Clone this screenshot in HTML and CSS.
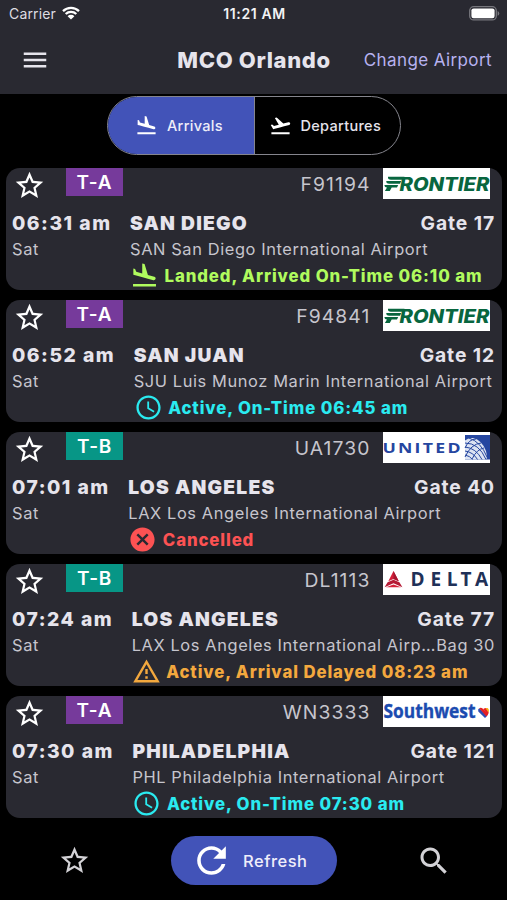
FILE: index.html
```html
<!DOCTYPE html>
<html lang="en">
<head>
<meta charset="utf-8">
<title>MCO Orlando</title>
<link rel="stylesheet" href="styles.css">
</head>
<body>
<svg class="defs" width="0" height="0">
  <symbol id="land" viewBox="0 0 24 24"><path d="M2.5 19h19v2h-19v-2zm7.18-5.73l4.35 1.16 5.31 1.42c.8.21 1.62-.26 1.84-1.06.21-.8-.26-1.62-1.06-1.84l-5.31-1.42-2.76-9.02L10.12 2v8.28L5.15 8.95l-.93-2.32-1.45-.39v5.17l1.6.43 5.31 1.43z"/></symbol>
  <symbol id="takeoff" viewBox="0 0 24 24"><path d="M2.5 19h19v2h-19v-2zm19.57-9.36c-.21-.8-1.04-1.28-1.84-1.06L14.92 10l-6.9-6.43-1.93.51 4.14 7.17-4.97 1.33-1.97-1.54-1.45.39 2.59 4.49 1.6-.43 5.31-1.42 4.35-1.16L21 11.49c.81-.23 1.28-1.05 1.07-1.85z"/></symbol>
  <symbol id="star" viewBox="0 0 24 24"><path d="M22 9.24l-7.19-.62L12 2 9.19 8.63 2 9.24l5.46 4.73L5.82 21 12 17.27 18.18 21l-1.63-7.03L22 9.24zM12 15.4l-3.76 2.27 1-4.28-3.32-2.88 4.38-.38L12 6.1l1.71 4.04 4.38.38-3.32 2.88 1 4.28L12 15.4z"/></symbol>
  <symbol id="clock" viewBox="0 0 24 24"><path d="M11.99 2C6.47 2 2 6.48 2 12s4.47 10 9.99 10C17.52 22 22 17.52 22 12S17.52 2 11.99 2zM12 20.100c-4.470 0-8.100-3.630-8.100-8.100s3.630-8.100 8.100-8.100 8.100 3.630 8.100 8.100-3.630 8.100-8.100 8.100zm.5-13.100H11v6l5.250 3.150.75-1.230-4.500-2.670z"/></symbol>
  <symbol id="cancel" viewBox="0 0 24 24"><path d="M12 2C6.470 2 2 6.470 2 12s4.470 10 10 10 10-4.470 10-10S17.530 2 12 2zm5 13.590L15.590 17 12 13.410 8.410 17 7 15.590 10.590 12 7 8.410 8.410 7 12 10.590 15.590 7 17 8.410 13.410 12 17 15.590z"/></symbol>
  <symbol id="warn" viewBox="0 0 24 24"><path d="M12 5.990L19.530 19H4.470L12 5.990M12 2L1 21h22L12 2zm1 14h-2v2h2v-2zm0-6h-2v4h2v-4z"/></symbol>
</svg>
<header>
  <div class="status-bar">
    <span class="carrier">Carrier
      <svg class="wifi" viewBox="0 0 18 14"><path d="M1 5.200A11.500 11.500 0 0 1 17 5.200M3.700 8A7.600 7.600 0 0 1 14.300 8" fill="none" stroke="#fff" stroke-width="2.300"/><path d="M9 13.600L5.600 10.200A4.800 4.800 0 0 1 12.400 10.200Z" fill="#fff"/></svg>
    </span>
    <span class="clock">11:21 AM</span>
    <svg class="battery" viewBox="0 0 31 15"><rect x=".7" y=".7" width="26.600" height="13.200" rx="4" fill="none" stroke="#77777d" stroke-width="1.300"/><rect x="2.400" y="2.400" width="23.200" height="9.800" rx="2.200" fill="#fff"/><path d="M28.600 5v4.800q1.700-.8 1.700-2.400T28.600 5z" fill="#77777d"/></svg>
  </div>
  <div class="app-bar">
    <svg class="menu" viewBox="0 0 24 24"><path d="M3 18h18v-2H3v2zm0-5h18v-2H3v2zm0-7v2h18V6H3z"/></svg>
    <h1>MCO Orlando</h1>
    <span class="change">Change Airport</span>
  </div>
</header>
<div class="segments">
  <div class="segment on"><svg class="seg-icon"><use href="#land"/></svg><span>Arrivals</span></div>
  <div class="segment"><svg class="seg-icon"><use href="#takeoff"/></svg><span>Departures</span></div>
</div>
<main>
  <article class="card">
    <div class="top"><svg class="fav"><use href="#star"/></svg><span class="terminal a">T-A</span><span class="flight">F91194</span>
      <svg class="logo" viewBox="0 0 107 31"><g fill="#08663f"><path d="M5 8.700h16.500l-1.500 3H8q-3.500 0-3-3zM3.300 13.100h14.900l-1.200 2.600H6.300q-3.300 0-3-2.600zM1.500 17.100h13.700L14 19.600H8.700L6.800 23H1.900L4 19.600q-2.700-.2-2.500-2.500z"/><text class="frontier" x="16.500" y="22.600" textLength="90" lengthAdjust="spacingAndGlyphs">RONTIER</text></g></svg></div>
    <div class="body"><div class="when"><b>06:31 am</b><span>Sat</span></div>
      <div class="info"><div class="line city"><b>SAN DIEGO</b><em>Gate 17</em></div><div class="line airport"><span>SAN San Diego International Airport</span></div><div class="line state landed"><svg><use href="#land"/></svg><span>Landed, Arrived On-Time 06:10 am</span></div></div></div>
  </article>
  <article class="card">
    <div class="top"><svg class="fav"><use href="#star"/></svg><span class="terminal a">T-A</span><span class="flight">F94841</span>
      <svg class="logo" viewBox="0 0 107 31"><g fill="#08663f"><path d="M5 8.700h16.500l-1.500 3H8q-3.500 0-3-3zM3.300 13.100h14.900l-1.200 2.600H6.300q-3.300 0-3-2.600zM1.500 17.100h13.700L14 19.600H8.700L6.800 23H1.900L4 19.600q-2.700-.2-2.500-2.500z"/><text class="frontier" x="16.500" y="22.600" textLength="90" lengthAdjust="spacingAndGlyphs">RONTIER</text></g></svg></div>
    <div class="body"><div class="when"><b>06:52 am</b><span>Sat</span></div>
      <div class="info"><div class="line city"><b>SAN JUAN</b><em>Gate 12</em></div><div class="line airport"><span>SJU Luis Munoz Marin International Airport</span></div><div class="line state active"><svg><use href="#clock"/></svg><span>Active, On-Time 06:45 am</span></div></div></div>
  </article>
  <article class="card">
    <div class="top"><svg class="fav"><use href="#star"/></svg><span class="terminal b">T-B</span><span class="flight">UA1730</span>
      <svg class="logo" viewBox="0 0 107 31"><g transform="translate(0 21) scale(1.22 1)"><text class="united" x="-.5" y="0" textLength="64" lengthAdjust="spacing">UNITED</text></g><rect x="82" y="3" width="25" height="24.500" fill="#2546a0"/><path d="M82 8.500Q85 5.500 90 6q9 2 13 13 1.500 5 .5 8.500H82z" fill="#dce3f2"/><g fill="none" stroke="#2546a0" stroke-width="1"><path d="M82 11q14 0 21 16.500M82 15q11 1 17 12.500M82 19q8 1 12.500 8.500M82 23q5 1 7.500 4.500M86 6q12 4 18 19M82 16Q86 7 93 7M82 25Q88 12 98 11M89 27Q94 17 101 16"/></g></svg></div>
    <div class="body"><div class="when"><b>07:01 am</b><span>Sat</span></div>
      <div class="info"><div class="line city"><b>LOS ANGELES</b><em>Gate 40</em></div><div class="line airport"><span>LAX Los Angeles International Airport</span></div><div class="line state cancelled"><svg><use href="#cancel"/></svg><span>Cancelled</span></div></div></div>
  </article>
  <article class="card">
    <div class="top"><svg class="fav"><use href="#star"/></svg><span class="terminal b">T-B</span><span class="flight">DL1113</span>
      <svg class="logo" viewBox="0 0 107 31"><path d="M10.500 7l5.300 10.200-5.300-2.300-5.200 2.300z" fill="#d5203a"/><path d="M10.500 7v7.900l5.300 2.300z" fill="#a51630"/><path d="M4.600 18.200l5.900-2.400 5.900 2.400 3 5-8.900-4-8.900 4z" fill="#b51a35"/><path d="M3 23.200l7.500-2.700 7.500 2.700z" fill="#d5203a"/><text class="delta" y="22" x="27.500 47.500 63.800 77.500 92">DELTA</text></svg></div>
    <div class="body"><div class="when"><b>07:24 am</b><span>Sat</span></div>
      <div class="info"><div class="line city"><b>LOS ANGELES</b><em>Gate 77</em></div><div class="line airport"><span>LAX Los Angeles International Airp…</span><i>Bag 30</i></div><div class="line state delayed"><svg><use href="#warn"/></svg><span>Active, Arrival Delayed 08:23 am</span></div></div></div>
  </article>
  <article class="card">
    <div class="top"><svg class="fav"><use href="#star"/></svg><span class="terminal a">T-A</span><span class="flight">WN3333</span>
      <svg class="logo" viewBox="0 0 107 31"><text class="southwest" x=".5" y="22" textLength="92" lengthAdjust="spacingAndGlyphs">Southwest</text><path d="M95.300 15.500L102 22l2.500-2.600-8.300-7.200q-1.600 1-.9 3.300z" fill="#304cb2"/><path d="M96.200 12.200q1.800-1 4 .8l4.900 5.500-1.800 2.100z" fill="#e51d23"/><path d="M100.200 13q2.300-1.700 4.500-.6l1 4.700-1.200 1.900z" fill="#e51d23"/><path d="M102.500 12q2.300-.4 3.100 1 .7 1.900-.3 3.500z" fill="#f9b612"/></svg></div>
    <div class="body"><div class="when"><b>07:30 am</b><span>Sat</span></div>
      <div class="info"><div class="line city"><b>PHILADELPHIA</b><em>Gate 121</em></div><div class="line airport"><span>PHL Philadelphia International Airport</span></div><div class="line state active"><svg><use href="#clock"/></svg><span>Active, On-Time 07:30 am</span></div></div></div>
  </article>
</main>
<footer>
  <svg class="nav-star"><use href="#star"/></svg>
  <div class="refresh"><svg viewBox="0 0 24 24"><path d="M17.650 6.350C16.200 4.900 14.210 4 12 4c-4.420 0-7.990 3.580-7.990 8s3.570 8 7.990 8c3.730 0 6.840-2.550 7.730-6h-2.080c-.82 2.330-3.040 4-5.650 4-3.310 0-6-2.690-6-6s2.690-6 6-6c1.660 0 3.140.69 4.220 1.780L13 11h7V4l-2.350 2.350z"/></svg><span>Refresh</span></div>
  <svg class="nav-search" viewBox="0 0 24 24"><path d="M15.500 14h-.79l-.28-.27C15.410 12.590 16 11.110 16 9.500 16 5.910 13.090 3 9.500 3S3 5.910 3 9.500 5.910 16 9.500 16c1.610 0 3.090-.59 4.230-1.570l.27.28v.79l5 4.990L20.490 19l-4.990-5zm-6 0C7.010 14 5 11.990 5 9.500S7.010 5 9.500 5 14 7.010 14 9.500 11.990 14 9.500 14z"/></svg>
</footer>
</body>
</html>
```
FILE: styles.css
```css
* { box-sizing: border-box; }
body {
  margin: 0;
  height: 900px;
  overflow: hidden;
  background: #000;
  color: #e6e4ec;
  font-family: Inter, "Liberation Sans", sans-serif;
  display: flex;
  flex-direction: column;
}
svg { fill: currentColor; flex: none; display: block; }
.defs { height: 0; width: 0; display: none; }
header { height: 94px; background: #292931; flex: none; }
.status-bar {
  display: grid;
  grid-template-columns: 1fr auto 1fr;
  align-items: center;
  height: 27px;
  padding: 0 7px 0 9px;
}
.carrier { display: flex; align-items: center; gap: 6px; font-size: 14px; letter-spacing: .15px; color: #dedde2; }
.wifi { width: 18px; height: 14px; margin-top: -1px; }
.clock { font-size: 14px; font-weight: 600; letter-spacing: .6px; color: #f2f2f4; }
.battery { width: 31px; height: 15px; justify-self: end; }
.app-bar {
  display: grid;
  grid-template-columns: 1fr auto 1fr;
  align-items: center;
  height: 66px;
  padding: 0 15px 0 20px;
}
.menu { width: 30px; height: 30px; }
h1 { margin: 0 0 0 -4px; font-size: 22px; font-weight: 850; letter-spacing: .650px; line-height: 30px; }
.change { justify-self: end; font-size: 17px; letter-spacing: .4px; color: #b7b2f0; }
.segments {
  width: 294px;
  height: 59px;
  margin: 2px 0 0 107px;
  flex: none;
  display: flex;
  overflow: hidden;
  border: 1.500px solid #85858d;
  border-radius: 30px;
}
.segment { flex: 1 1 0; min-width: 0; display: flex; align-items: center; gap: 9px; padding-left: 13.500px; font-size: 14.500px; font-weight: 500; letter-spacing: .3px; }
.segment.on { flex: 0 0 147px; background: #4253b8; border-right: 1px solid #85858d; padding-left: 27px; color: #eeedf8; }
.seg-icon { width: 23px; height: 23px; color: #fff; margin-top: -1px; }
main { display: flex; flex-direction: column; gap: 10px; margin: 13px 5px 0 6px; flex: none; }
.card { height: 122px; border-radius: 14px; background: #292931; padding: 0 7px 0 6px; }
.top { display: flex; align-items: flex-start; height: 41px; padding-right: 5px; }
.fav { width: 33px; height: 33px; color: #fff; margin: 1px 20px 0 1px; }
.terminal { width: 57px; height: 28px; line-height: 29px; text-align: center; font-size: 19px; font-weight: 600; letter-spacing: .8px; color: #fff; }
.terminal.a { background: #763a9b; }
.terminal.b { background: #079686; }
.flight { margin-left: auto; margin-right: 12.500px; line-height: 33px; font-size: 19.300px; letter-spacing: 1.100px; color: #c6c5cd; }
.logo { width: 107px; height: 31px; background: #fff; }
.frontier { font: italic 800 18.500px Inter, sans-serif; }
.united { font: 700 14.500px "Open Sans", sans-serif; fill: #2546a0; }
.delta { font: 700 19px "Open Sans", sans-serif; fill: #1f3158; }
.southwest { font: 700 20px "Open Sans", sans-serif; fill: #1b4bb0; stroke: #1b4bb0; stroke-width: .4px; }
.body { display: flex; gap: 18.500px; }
.when { display: flex; flex-direction: column; }
.when b, .city { font-size: 19.300px; font-weight: 850; line-height: 28px; letter-spacing: 1.200px; white-space: nowrap; }
.when b { letter-spacing: 1.500px; }
.when span, .airport { font-size: 16.400px; line-height: 25px; letter-spacing: .610px; color: #c6c5cd; }
.info { flex: 1; min-width: 0; }
.line { display: flex; justify-content: space-between; white-space: nowrap; }
.city em { font-style: normal; font-weight: 700; letter-spacing: .9px; }
.airport i { font-style: normal; flex: none; }
.state { justify-content: flex-start; align-items: center; gap: 5.500px; height: 27px; font-size: 16.800px; font-weight: 800; letter-spacing: .9px; }
.state svg { width: 29px; height: 29px; }
.landed { color: #b0fb5e; }
.active { color: #2aeaf0; }
.cancelled { color: #fc5253; }
.delayed { color: #f3a83e; }
footer { display: flex; align-items: center; height: 49px; margin-top: 18px; padding: 0 55px 0 57px; flex: none; color: #d3d2d6; }
.nav-star { width: 33px; height: 33px; margin: 0 0 0 .5px; }
.refresh { display: flex; align-items: center; gap: 10px; width: 166px; height: 49px; margin-left: 80.500px; padding-left: 19px; border-radius: 25px; background: #4253b8; color: #efeefa; font-size: 16.500px; font-weight: 500; letter-spacing: .5px; }
.refresh svg { width: 43px; height: 43px; color: #fff; }
.nav-search { width: 36px; height: 36px; margin-left: auto; }
```
